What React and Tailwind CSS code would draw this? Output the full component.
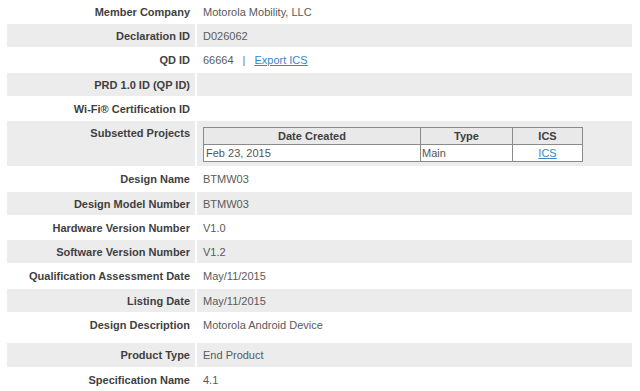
const rows = [
  { label: 'Member Company', value: 'Motorola Mobility, LLC', h: 'h-[23px]' },
  { label: 'Declaration ID', value: 'D026062', h: 'h-[23px]' },
  { label: 'QD ID', value: 'qd', h: 'h-[24px]' },
  { label: 'PRD 1.0 ID (QP ID)', value: '', h: 'h-[23px]' },
  { label: 'Wi-Fi® Certification ID', value: '', h: 'h-[23px]' },
  { label: 'Subsetted Projects', value: 'projects', h: 'h-[45px]' },
  { label: 'Design Name', value: 'BTMW03', h: 'h-[24px]' },
  { label: 'Design Model Number', value: 'BTMW03', h: 'h-[23px]' },
  { label: 'Hardware Version Number', value: 'V1.0', h: 'h-[23px]' },
  { label: 'Software Version Number', value: 'V1.2', h: 'h-[23px]' },
  { label: 'Qualification Assessment Date', value: 'May/11/2015', h: 'h-[24px]' },
  { label: 'Listing Date', value: 'May/11/2015', h: 'h-[23px]' },
  { label: 'Design Description', value: 'Motorola Android Device', h: 'h-[29px]' },
  { label: 'Product Type', value: 'End Product', h: 'h-[24px]' },
  { label: 'Specification Name', value: '4.1', h: 'h-[23px]' },
];

function Projects() {
  return (
    <table className="w-[380px] border-collapse border border-[#8a8a8a] text-[11px] leading-[14px]">
      <thead>
        <tr className="bg-[#e9e9e9] h-[17px]">
          <th className="w-[217px] border border-[#8a8a8a] font-bold text-[#3f3f3f] text-center">Date Created</th>
          <th className="w-[92px] border border-[#8a8a8a] font-bold text-[#3f3f3f] text-center">Type</th>
          <th className="border border-[#8a8a8a] font-bold text-[#3f3f3f] text-center">ICS</th>
        </tr>
      </thead>
      <tbody>
        <tr className="bg-white h-[17px]">
          <td className="border border-[#8a8a8a] px-[2px] text-[#555]">Feb 23, 2015</td>
          <td className="border border-[#8a8a8a] px-[1px] text-[#555]">Main</td>
          <td className="border border-[#8a8a8a] text-center">
            <a className="text-[#3b86c6] underline">ICS</a>
          </td>
        </tr>
      </tbody>
    </table>
  );
}

function Value({ value }) {
  if (value === 'qd') {
    return (
      <span>
        66664
        <span className="mx-[9px] text-[#777]">|</span>
        <a className="text-[#3b86c6] underline">Export ICS</a>
      </span>
    );
  }
  if (value === 'projects') return <Projects />;
  return value;
}

export default function App() {
  return (
    <div className="w-[640px] h-[391px] overflow-hidden bg-white font-['Liberation_Sans',Arial,sans-serif] text-[11px] leading-[14px]">
      <div className="flex flex-col gap-[1px] pl-[7px] pr-[8px]">
        {rows.map((r, i) => {
          const bg = i % 2 === 1 ? 'bg-[#ececec]' : 'bg-white';
          return (
            <div key={r.label} className={`flex gap-[2px] ${r.h} shrink-0`}>
              <div className={`w-[188px] shrink-0 ${bg} pt-[5px] pr-[5px] text-right font-bold text-[#3f3f3f]`}>
                {r.label}
              </div>
              <div className={`flex-1 ${bg} ${r.value === 'projects' ? 'pt-[6px]' : 'pt-[5px]'} pl-[6px] text-[#5a5a5a]`}>
                <Value value={r.value} />
              </div>
            </div>
          );
        })}
      </div>
    </div>
  );
}
